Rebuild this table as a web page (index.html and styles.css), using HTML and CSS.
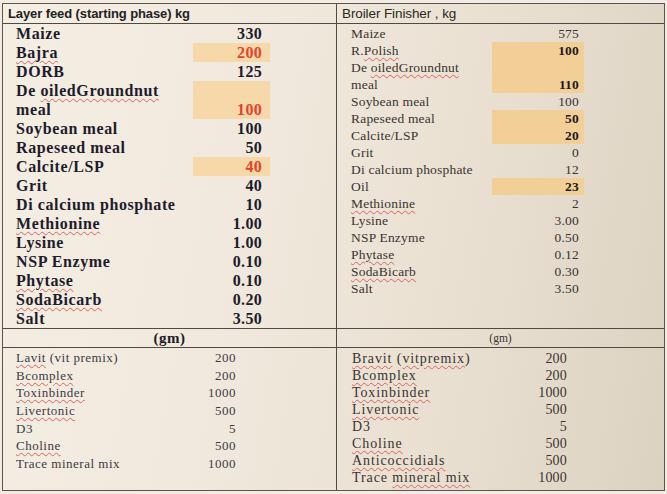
FILE: index.html
```html
<!DOCTYPE html>
<html>
<head>
<meta charset="utf-8">
<link rel="stylesheet" href="styles.css">
</head>
<body>
<div class="sheet">
  <div class="cell head head-left">Layer feed (starting phase) kg</div>
  <div class="cell head head-right">Broiler Finisher , kg</div>

  <div class="cell body-left">
    <div class="list big">
      <div class="lbl">Maize</div><div class="num">330</div>
      <div class="lbl"><span class="sp">Bajra</span></div><div class="num hl red">200</div>
      <div class="lbl">DORB</div><div class="num">125</div>
      <div class="lbl two">De <span class="sp">oiledGroundnut</span><br>meal</div><div class="num hl red two">100</div>
      <div class="lbl">Soybean meal</div><div class="num">100</div>
      <div class="lbl">Rapeseed meal</div><div class="num">50</div>
      <div class="lbl">Calcite/LSP</div><div class="num hl red">40</div>
      <div class="lbl">Grit</div><div class="num">40</div>
      <div class="lbl">Di calcium phosphate</div><div class="num">10</div>
      <div class="lbl"><span class="sp">Methionine</span></div><div class="num">1.00</div>
      <div class="lbl">Lysine</div><div class="num">1.00</div>
      <div class="lbl">NSP Enzyme</div><div class="num">0.10</div>
      <div class="lbl"><span class="sp">Phytase</span></div><div class="num">0.10</div>
      <div class="lbl"><span class="sp">SodaBicarb</span></div><div class="num">0.20</div>
      <div class="lbl">Salt</div><div class="num">3.50</div>
    </div>
  </div>

  <div class="cell body-right">
    <div class="list small">
      <div class="lbl">Maize</div><div class="num">575</div>
      <div class="lbl">R.<span class="sp">Polish</span></div><div class="num hl b">100</div>
      <div class="lbl two">De <span class="sp">oiledGroundnut</span><br>meal</div><div class="num hl b two">110</div>
      <div class="lbl">Soybean meal</div><div class="num">100</div>
      <div class="lbl">Rapeseed meal</div><div class="num hl b">50</div>
      <div class="lbl">Calcite/LSP</div><div class="num hl b">20</div>
      <div class="lbl">Grit</div><div class="num">0</div>
      <div class="lbl">Di calcium phosphate</div><div class="num">12</div>
      <div class="lbl">Oil</div><div class="num hl b">23</div>
      <div class="lbl"><span class="sp">Methionine</span></div><div class="num">2</div>
      <div class="lbl">Lysine</div><div class="num">3.00</div>
      <div class="lbl">NSP Enzyme</div><div class="num">0.50</div>
      <div class="lbl"><span class="sp">Phytase</span></div><div class="num">0.12</div>
      <div class="lbl"><span class="sp">SodaBicarb</span></div><div class="num">0.30</div>
      <div class="lbl">Salt</div><div class="num">3.50</div>
    </div>
  </div>

  <div class="cell gm gm-left">(gm)</div>
  <div class="cell gm gm-right">(gm)</div>

  <div class="cell foot-left">
    <div class="list foot fl">
      <div class="lbl"><span class="sp">Lavit</span> (vit premix)</div><div class="num">200</div>
      <div class="lbl"><span class="sp">Bcomplex</span></div><div class="num">200</div>
      <div class="lbl"><span class="sp">Toxinbinder</span></div><div class="num">1000</div>
      <div class="lbl"><span class="sp">Livertonic</span></div><div class="num">500</div>
      <div class="lbl">D3</div><div class="num">5</div>
      <div class="lbl"><span class="sp">Choline</span></div><div class="num">500</div>
      <div class="lbl">Trace mineral mix</div><div class="num">1000</div>
    </div>
  </div>

  <div class="cell foot-right">
    <div class="list foot fr">
      <div class="lbl"><span class="sp">Bravit</span> (<span class="sp">vitpremix</span>)</div><div class="num">200</div>
      <div class="lbl"><span class="sp">Bcomplex</span></div><div class="num">200</div>
      <div class="lbl"><span class="sp">Toxinbinder</span></div><div class="num">1000</div>
      <div class="lbl"><span class="sp">Livertonic</span></div><div class="num">500</div>
      <div class="lbl">D3</div><div class="num">5</div>
      <div class="lbl"><span class="sp">Choline</span></div><div class="num">500</div>
      <div class="lbl"><span class="sp">Anticoccidials</span></div><div class="num">500</div>
      <div class="lbl">Trace <span class="sp">mineral mix</span></div><div class="num">1000</div>
    </div>
  </div>
</div>
</body>
</html>
```

FILE: styles.css
```css
html, body {
  margin: 0;
  padding: 0;
  background: #f2ece3;
}

body {
  width: 667px;
  height: 494px;
  overflow: hidden;
  padding-top: 3px;
  padding-left: 2px;
  box-sizing: border-box;
}

.sheet {
  width: 663px;
  height: 488px;
  box-sizing: border-box;
  border: 1px solid #5a5550;
  display: grid;
  grid-template-columns: 334px 1fr;
  grid-template-rows: 20px 305px 19px 1fr;
  background: linear-gradient(100deg, #f5eee3 0%, #f0e8dc 40%, #e8dfd0 70%, #dcd2c2 100%);
  color: #1d1b28;
}

.cell {
  box-sizing: border-box;
}

.head-left, .body-left, .gm-left, .foot-left {
  border-right: 1px solid #4e4a46;
}

.head, .body-left, .body-right, .gm {
  border-bottom: 1px solid #4e4a46;
}

.head {
  font-family: "Liberation Sans", Arial, sans-serif;
  font-size: 13px;
  line-height: 19px;
  letter-spacing: -0.1px;
  color: #222;
}

.head-left {
  font-weight: bold;
  padding-left: 5px;
}

.head-right {
  padding-left: 5px;
  font-size: 13.5px;
  color: #2a2622;
}

.list {
  display: grid;
  align-items: center;
}

.lbl {
  white-space: nowrap;
}

.num {
  text-align: right;
  align-self: stretch;
  display: flex;
  align-items: center;
  justify-content: flex-end;
}

.num.two {
  align-items: flex-end;
}

.sp {
  text-decoration: underline wavy #e0605a;
  text-decoration-thickness: 1px;
  text-underline-offset: 2px;
}

/* left big list */
.big {
  font-family: "Liberation Serif", "Times New Roman", serif;
  font-weight: bold;
  font-size: 16px;
  letter-spacing: 0.6px;
  line-height: 19px;
  grid-template-columns: 177px 77px;
  grid-auto-rows: 19px;
  padding-left: 13px;
  color: #1e1c2c;
}

.big .num {
  padding-right: 8px;
  letter-spacing: 0.3px;
}

.big .two, .small .two {
  grid-row: span 2;
}

.hl {
  background: #f7d8a8;
}

.red {
  color: #e4432c;
}

/* right small list */
.small {
  font-family: "Liberation Serif", "Times New Roman", serif;
  font-size: 13.5px;
  letter-spacing: 0.2px;
  line-height: 17px;
  grid-template-columns: 141px 92px;
  grid-auto-rows: 17px;
  padding-left: 14px;
  padding-top: 1px;
  color: #3a3432;
}

.small .num {
  padding-right: 5px;
}

.small .hl {
  background: #f3cf98;
}

.b {
  font-weight: bold;
  color: #1e1a1a;
}

/* gm rows */
.gm {
  font-family: "Liberation Serif", "Times New Roman", serif;
  text-align: center;
  line-height: 18px;
}

.gm-left {
  font-weight: bold;
  font-size: 15px;
  letter-spacing: 0.5px;
}

.gm-right {
  font-size: 11.5px;
  color: #3a3432;
}

/* foot lists */
.foot {
  font-family: "Liberation Serif", "Times New Roman", serif;
  font-size: 13px;
  letter-spacing: 0.5px;
  color: #3c3a44;
}

.fl {
  grid-template-columns: 170px 50px;
  grid-auto-rows: 17.7px;
  padding-left: 13px;
  padding-top: 1px;
}

.fr {
  font-size: 14px;
  letter-spacing: 0.9px;
  grid-template-columns: 150px 65px;
  grid-auto-rows: 17.1px;
  padding-left: 15px;
  padding-top: 2px;
  color: #3a3432;
}

.fr .num {
  letter-spacing: 0.2px;
}
```
